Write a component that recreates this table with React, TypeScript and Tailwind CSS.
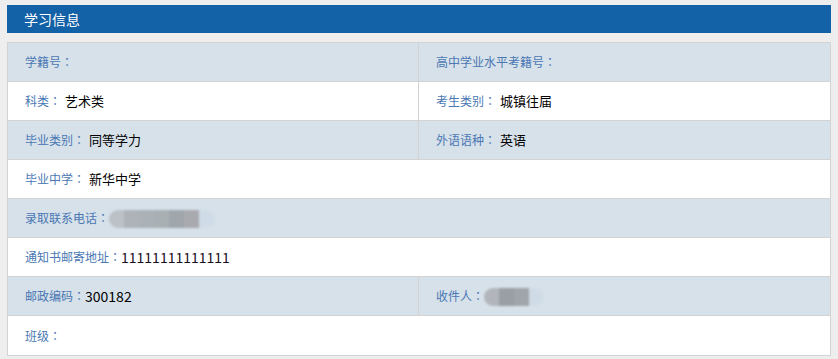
import React from 'react';

type Cell = { label: string; value?: React.ReactNode };

// blurred placeholder for masked personal data
const Masked: React.FC<{ shades: string[]; tail?: number }> = ({ shades, tail = 0 }) => (
    <span className="inline-flex items-center h-[18px] rounded-full overflow-hidden blur-[1px] align-middle">
        {shades.map((c, i) => (
            <span key={i} className="h-full w-[15px]" style={{ backgroundColor: c }} />
        ))}
        {tail > 0 && <span className="h-full bg-[#cfdbe6]" style={{ width: tail }} />}
    </span>
);

const rows: { cells: Cell[]; shaded: boolean }[] = [
    { shaded: true, cells: [{ label: '学籍号' }, { label: '高中学业水平考籍号' }] },
    { shaded: false, cells: [{ label: '科类', value: '艺术类' }, { label: '考生类别', value: '城镇往届' }] },
    { shaded: true, cells: [{ label: '毕业类别', value: '同等学力' }, { label: '外语语种', value: '英语' }] },
    { shaded: false, cells: [{ label: '毕业中学', value: '新华中学' }] },
    {
        shaded: true,
        cells: [{
            label: '录取联系电话',
            value: <Masked shades={['#bcc1c7', '#adb3b9', '#aab1b7', '#a8b0b4', '#9fa6ac', '#a9aaaf']} tail={16} />,
        }],
    },
    { shaded: false, cells: [{ label: '通知书邮寄地址', value: <span className="text-[14px] text-[#1a0f24]">11111111111111</span> }] },
    {
        shaded: true,
        cells: [
            { label: '邮政编码', value: <span className="text-[14px]">300182</span> },
            { label: '收件人', value: <Masked shades={['#b2b6bc', '#9a9fa5', '#a0a5aa']} tail={14} /> },
        ],
    },
    { shaded: false, cells: [{ label: '班级' }] },
];

const App: React.FC = () => {
    return (
        <div className="min-h-[359px] bg-[#eeeeee] px-[7px] pt-[5px] pb-[5px]" style={{ fontFamily: '"Noto Sans CJK SC", "Microsoft YaHei", sans-serif' }}>
            <div className="h-[28px] bg-[#1361a6] text-white text-[14px] leading-[28px] pl-[17px]">学习信息</div>
            <div className="mt-[9px] border border-[#d3d3d3] bg-white">
                {rows.map((row, i) => (
                    <div
                        key={i}
                        className={`flex h-[39px] ${i < rows.length - 1 ? 'border-b border-[#d3d3d3]' : ''} ${row.shaded ? 'bg-[#d7e1ea]' : 'bg-white'}`}
                    >
                        {row.cells.map((cell, j) => (
                            <div
                                key={j}
                                className={`flex items-center pl-[17px] ${row.cells.length > 1 && j === 0 ? 'w-[411px] border-r border-[#d3d3d3]' : 'flex-1'}`}
                            >
                                <span className="text-[12px] text-[#4a78b3]">
                                    {cell.label}
                                    <span className="font-['Noto_Sans_CJK_JP']">：</span>
                                </span>
                                {cell.value !== undefined && (
                                    <span className={`text-[13px] text-black ${typeof cell.value === 'string' ? 'ml-[4px]' : ''}`}>{cell.value}</span>
                                )}
                            </div>
                        ))}
                    </div>
                ))}
            </div>
        </div>
    );
};

export default App;
